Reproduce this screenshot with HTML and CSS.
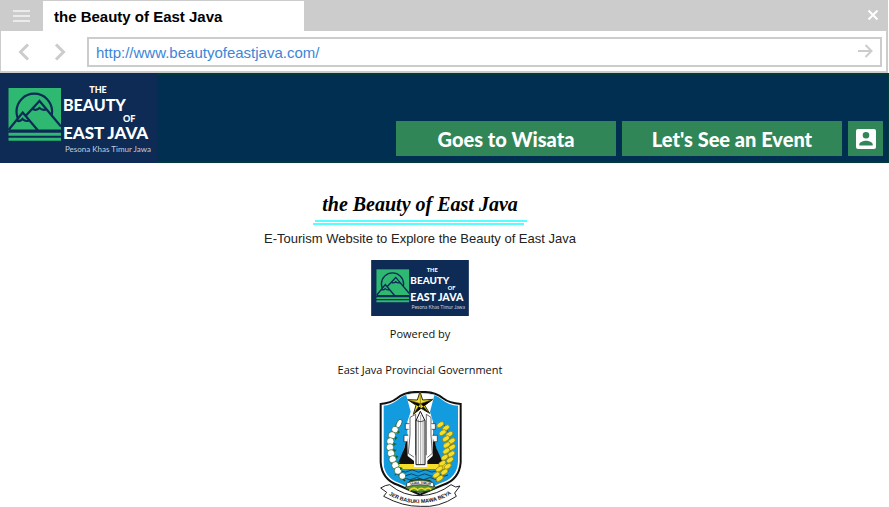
FILE: index.html
```html
<!DOCTYPE html>
<html lang="en">
<head>
<meta charset="utf-8">
<title>the Beauty of East Java</title>
<link rel="stylesheet" href="styles.css">
</head>
<body>
<svg class="defs" aria-hidden="true">
  <symbol id="logo" viewBox="0 0 157 90">
    <rect width="157" height="90" fill="#0d2b54"/>
    <rect x="8.5" y="15" width="52.5" height="43" fill="#2eb872"/>
    <path d="M8.5 61.3H61M8.5 66.3H61" stroke="#2eb872" stroke-width="3"/>
    <g fill="none" stroke="#0d2b54" stroke-width="2.2">
      <circle cx="34.3" cy="38.5" r="17.8"/>
      <path d="M8.500 58L22.700 39.500L38 58H8.500z" fill="#2eb872" stroke="none"/>
      <path d="M25 43L39.500 28L61 53V58H38z" fill="#2eb872" stroke="none"/>
      <path d="M8.500 57L22.700 39.500L38 57.500M26 42.500L39.500 28L61 53.500M33 36q3.500 2 6.500-1q3.500 3 7.500 1M17 47.500q3 1.500 5.500-1.500q3 3 6.500 1.500M8.500 57.500H61"/>
    </g>
    <g class="logo-words">
      <text x="98" y="20" font-size="9" text-anchor="middle">THE</text>
      <text x="63" y="38" font-size="16">BEAUTY</text>
      <text x="123" y="49" font-size="9">OF</text>
      <text x="63" y="66" font-size="17">EAST JAVA</text>
    </g>
    <text class="logo-motto" x="65" y="79" font-size="8">Pesona Khas Timur Jawa</text>
  </symbol>
</svg>

<div class="browser">
  <div class="tabs">
    <button class="icon-button menu" aria-label="Menu">
      <svg width="17" height="13" viewBox="0 0 17 13"><path d="M0 1h17M0 6h17M0 11h17" stroke="#ebebeb" stroke-width="2"/></svg>
    </button>
    <div class="tab">the Beauty of East Java</div>
    <button class="icon-button close" aria-label="Close">
      <svg width="12" height="12" viewBox="0 0 12 12"><path d="M1.500 1.500l9 9M10.500 1.500l-9 9" stroke="#fff" stroke-width="2"/></svg>
    </button>
  </div>
  <div class="toolbar">
    <button class="icon-button" aria-label="Back">
      <svg width="12" height="18" viewBox="0 0 12 18"><path d="M10 1.500L2.500 9l7.500 7.500" fill="none" stroke="#ccc" stroke-width="3"/></svg>
    </button>
    <button class="icon-button" aria-label="Forward">
      <svg width="12" height="18" viewBox="0 0 12 18"><path d="M2 1.500L9.500 9L2 16.500" fill="none" stroke="#ccc" stroke-width="3"/></svg>
    </button>
    <form class="address">
      <input type="text" aria-label="Address" value="http://www.beautyofeastjava.com/">
      <button type="button" class="icon-button" aria-label="Go">
        <svg width="15" height="14" viewBox="0 0 15 14"><path d="M0 7h13M7.500 1L13.500 7L7.500 13" fill="none" stroke="#ccc" stroke-width="2"/></svg>
      </button>
    </form>
  </div>
</div>

<header class="site-header">
  <svg class="header-logo" role="img" aria-label="The Beauty of East Java"><use href="#logo"/></svg>
  <nav class="nav">
    <a class="nav-link" href="#wisata">Goes to Wisata</a>
    <a class="nav-link" href="#event">Let's See an Event</a>
    <a class="nav-account" href="#account" aria-label="Account">
      <svg width="20" height="20" viewBox="0 0 20 20"><path fill="#fff" fill-rule="evenodd" d="M2 0h16q2 0 2 2v16q0 2-2 2H2q-2 0-2-2V2q0-2 2-2zM10 3a3.300 3.300 0 1 0 0 6.600A3.300 3.300 0 0 0 10 3zM3.300 16.500h13.400v-1.200c0-2.300-4.400-3.500-6.700-3.500s-6.700 1.200-6.700 3.500z"/></svg>
    </a>
  </nav>
</header>

<main class="content">
  <h1 class="title">the Beauty of East Java</h1>
  <svg class="underline" width="214" height="5" viewBox="0 0 214 5" aria-hidden="true"><path d="M2 1h212M0 4h211" stroke="#5ff" stroke-width="2"/></svg>
  <p class="tagline">E-Tourism Website to Explore the Beauty of East Java</p>
  <svg class="small-logo" role="img" aria-label="The Beauty of East Java"><use href="#logo"/></svg>
  <p class="credit">Powered by</p>
  <p class="credit">East Java Provincial Government</p>
  <svg class="emblem" viewBox="24 18 252 348" role="img" aria-label="Emblem of East Java">
    <defs>
      <clipPath id="shield"><path d="M150 26Q105 24 84 44Q63 60 40 62V230Q42 278 88 294L150 322L212 294Q262 278 264 230V62Q236 60 216 44Q195 24 150 26z"/></clipPath>
      <path id="ribbon" d="M48 324Q100 358 152 354Q207 353 252 321"/>
      <path id="plate" d="M112 304Q150 290 190 304"/>
      <g id="leaf"><ellipse rx="12" ry="7" transform="rotate(-35)"/></g>
    </defs>
    <path d="M150 21Q103 19 81 40Q62 55 32 57V232Q36 284 84 300L150 329L218 300Q268 284 272 232V57Q238 55 219 40Q197 19 150 21z" fill="#fff" stroke="#111" stroke-width="6"/>
    <g clip-path="url(#shield)">
      <path d="M40 20h230v310H40z" fill="#129bdf"/>
      <path d="M106 20L122 80L112 110V150L90 240H210L189 150V110L180 80L196 20z" fill="#fff"/>
      <path d="M112 145L103 190L82 240H136V231L113 213zM189 145L199 190L222 240H168V231L188 213z" fill="#111"/>
      <path d="M120 97V150L115 205L137 220V88zM183 97V150L187 205L169 220V88z" fill="#fff" stroke="#222" stroke-width="2"/>
      <path d="M118 116h-12v17h10M184 116h12v17h-11M115 151h-13v19h10M187 151h15v19h-11" fill="#fff" stroke="#222" stroke-width="2"/>
      <path d="M76 237H232V256H76z" fill="#f6df28"/>
      <path d="M132 211h40v35h-40z" fill="#fff"/>
      <path d="M74 252H232V286H74z" fill="#189bd8"/>
      <path d="M76 258q10-7 20 0t20 0t20 0t20 0t20 0t20 0t20 0t20 0M74 270q10-7 20 0t20 0t20 0t20 0t20 0t20 0t20 0t20 0M90 281q10-7 20 0t20 0t20 0t20 0t20 0t20 0" fill="none" stroke="#0c4562" stroke-width="3"/>
      <path d="M138 239V107L151 79L165 107V239z" fill="#fff" stroke="#111" stroke-width="3"/>
      <path d="M145 103V237M152 90V237M159 103V237" stroke="#777" stroke-width="2"/>
      <path d="M137 105Q151 115 165 105" fill="none" stroke="#111" stroke-width="2"/>
    </g>
    <path d="M150 20L158 45L189 43L164 61L179 85L153 70L130 88L138 61L113 44L142 45z" fill="#f5e12b" stroke="#302d09" stroke-width="3"/>
    <path d="M150 20L152 70M113 44L152 56L179 85M189 43L151 56L130 88" stroke="#6e6415" stroke-width="2"/>
    <path d="M90 109Q51 155 62 214Q68 255 105 288" fill="none" stroke="#174b19" stroke-width="5"/>
    <g fill="#fff" stroke="#205c22" stroke-width="2">
      <ellipse cx="87" cy="116" rx="7" ry="14" transform="rotate(25 87 116)"/>
      <circle cx="75" cy="134" r="10"/><circle cx="66" cy="151" r="11"/><circle cx="61" cy="169" r="11"/><circle cx="60" cy="187" r="11"/><circle cx="63" cy="205" r="11"/><circle cx="68" cy="223" r="11"/><circle cx="76" cy="241" r="11"/><circle cx="84" cy="257" r="11"/><circle cx="97" cy="273" r="10"/>
    </g>
    <path d="M84 136l6 6l-8 5zM75 154l8 4l-8 8zM70 173l10 4l-10 6zM70 192l10 3l-8 7zM77 211l9 3l-8 7zM82 229l10 3l-8 7zM89 246l10 3l-8 7z" fill="#176a24"/>
    <path d="M214 108Q249 148 240 207Q235 252 198 290" fill="none" stroke="#63590d" stroke-width="3"/>
    <g fill="#f6df28" stroke="#8d7d10" stroke-width="2">
      <use href="#leaf" x="211" y="119"/><use href="#leaf" x="228" y="129"/><use href="#leaf" x="218" y="143"/><use href="#leaf" x="238" y="148"/><use href="#leaf" x="228" y="161"/><use href="#leaf" x="245" y="168"/><use href="#leaf" x="230" y="180"/><use href="#leaf" x="246" y="187"/><use href="#leaf" x="229" y="198"/><use href="#leaf" x="244" y="207"/><use href="#leaf" x="224" y="217"/><use href="#leaf" x="240" y="225"/><use href="#leaf" x="217" y="235"/><use href="#leaf" x="233" y="244"/><use href="#leaf" x="208" y="252"/><use href="#leaf" x="223" y="261"/><use href="#leaf" x="199" y="270"/><use href="#leaf" x="209" y="280"/>
    </g>
    <path d="M105 309L120 287Q150 278 181 287L198 309Q150 335 105 309z" fill="#5b962e" stroke="#163813" stroke-width="3"/>
    <path d="M110 294Q150 279 191 294V306Q150 292 110 306z" fill="#fff" stroke="#222" stroke-width="2"/>
    <path d="M118 317q13-14 25-2q10-10 22-1q10-9 19 0" fill="none" stroke="#e8d832" stroke-width="5"/>
    <path d="M46 302L59 299Q101 334 151 332Q203 330 243 299L257 306L270 303L254 324L259 334Q207 369 151 364Q98 365 41 334L50 322L32 309z" fill="#fff" stroke="#222" stroke-width="3"/>
    <text class="emblem-text" font-size="10"><textPath href="#plate" startOffset="50%" text-anchor="middle">JAWA TIMUR</textPath></text>
    <text class="emblem-text" font-size="16"><textPath href="#ribbon" startOffset="50%" text-anchor="middle">JER BASUKI MAWA BEYA</textPath></text>
  </svg>
</main>
</body>
</html>
```
FILE: styles.css
```css
* {
  box-sizing: border-box;
}

body {
  margin: 0;
  background: #fff;
  color: #222;
  font-family: "Liberation Sans", Arial, sans-serif;
}

.defs {
  position: absolute;
  width: 0;
  height: 0;
}

.icon-button {
  display: flex;
  align-items: center;
  justify-content: center;
  padding: 0;
  border: 0;
  background: none;
}

.browser {
  margin-right: 1px;
  border: solid #ccc;
  border-width: 1px 2px 2px 1px;
}

.tabs {
  display: flex;
  height: 30px;
  background: #ccc;
}

.menu {
  width: 42px;
  padding-right: 2px;
}

.tab {
  width: 261px;
  padding-left: 11px;
  background: #fff;
  color: #000;
  font-size: 15px;
  font-weight: bold;
  line-height: 32px;
}

.close {
  width: 26px;
  padding-bottom: 2px;
  margin-left: auto;
}

.toolbar {
  display: flex;
  align-items: center;
  gap: 24px;
  padding: 6px 4px 4px 17px;
}

.address {
  display: flex;
  flex: 1;
  height: 30px;
  margin-left: -3px;
  border: 2px solid #ccc;
  padding: 0 7px;
}

.address input {
  flex: 1;
  min-width: 0;
  padding: 0;
  border: 0;
  outline: 0;
  background: none;
  color: #3d85d8;
  font: 15px "Liberation Sans", Arial, sans-serif;
}

.address .icon-button {
  height: 24px;
}

.site-header {
  display: flex;
  align-items: flex-end;
  justify-content: space-between;
  height: 90px;
  padding-right: 6px;
  background: #002f51;
  box-shadow: inset -1px 0 #003b3a, inset 0 2px #003b3a, inset 0 -2px #003b3a;
}

.header-logo {
  width: 157px;
  height: 90px;
}

.logo-words {
  fill: #fff;
  font-family: Lato, sans-serif;
  font-weight: 900;
}

.logo-motto {
  fill: #c5cedd;
  font-family: Lato, sans-serif;
}

.nav {
  display: flex;
  gap: 6px;
  padding-bottom: 7px;
}

.nav-link,
.nav-account {
  display: flex;
  align-items: center;
  justify-content: center;
  height: 35px;
  background: #308657;
}

.nav-link {
  width: 220px;
  color: #fff;
  font: 900 20px Lato, sans-serif;
  text-decoration: none;
}

.nav-account {
  width: 35px;
}

.content {
  display: flex;
  flex-direction: column;
  align-items: center;
  padding: 25px 49px 0 0;
}

.title {
  margin: 0;
  color: #000;
  font: italic bold 20px/32px "Liberation Serif", serif;
}

.underline {
  display: block;
}

.tagline {
  margin: 4px 0 11px;
  font-size: 13px;
  line-height: 20px;
}

.small-logo {
  width: 98px;
  height: 56px;
  margin-bottom: 9px;
}

.credit {
  margin: 0 0 18px;
  color: #111;
  font: 11px/18px "Open Sans", sans-serif;
}

.emblem {
  width: 84px;
  height: 116px;
  margin-top: -6px;
}

.emblem-text {
  fill: #111;
  font-family: "Liberation Sans", Arial, sans-serif;
  font-weight: bold;
}
```
